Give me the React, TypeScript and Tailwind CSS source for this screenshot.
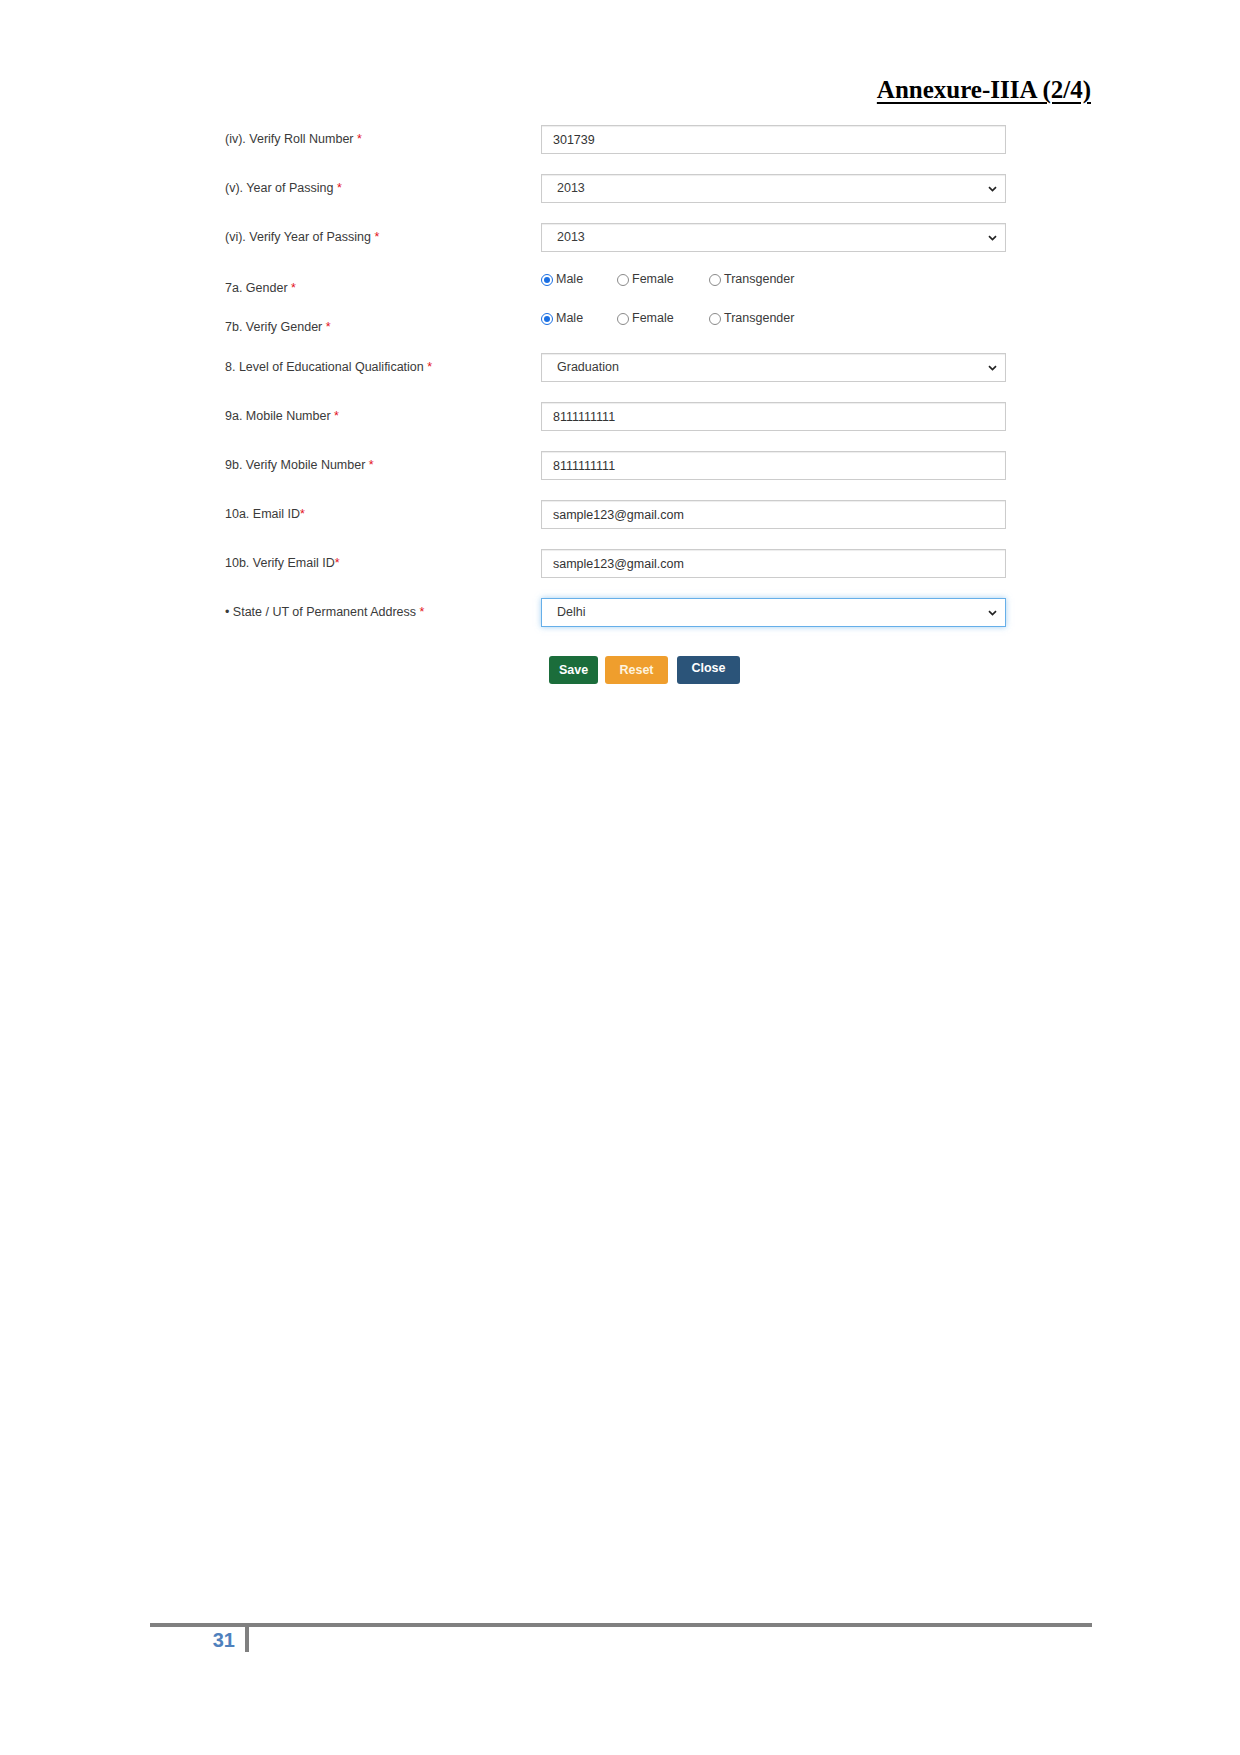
import React from "react";

type Row =
  | { kind: "input"; label: string; value: string; tight?: boolean }
  | { kind: "select"; label: string; value: string; focus?: boolean; tight?: boolean };

const topRows: Row[] = [
  { kind: "input", label: "(iv). Verify Roll Number", value: "301739" },
  { kind: "select", label: "(v). Year of Passing", value: "2013" },
  { kind: "select", label: "(vi). Verify Year of Passing", value: "2013" },
];

const bottomRows: Row[] = [
  { kind: "select", label: "8. Level of Educational Qualification", value: "Graduation" },
  { kind: "input", label: "9a. Mobile Number", value: "8111111111" },
  { kind: "input", label: "9b. Verify Mobile Number", value: "8111111111" },
  { kind: "input", label: "10a. Email ID", value: "sample123@gmail.com", tight: true },
  { kind: "input", label: "10b. Verify Email ID", value: "sample123@gmail.com", tight: true },
  { kind: "select", label: "\u2022 State / UT of Permanent Address", value: "Delhi", focus: true },
];

function Label({ text, tight }: { text: string; tight?: boolean }) {
  return (
    <div className="w-[316px] shrink-0 leading-[15px]">
      {text}
      {!tight && " "}
      <span className="text-[#e3101a]">*</span>
    </div>
  );
}

function Chevron() {
  return (
    <svg width="9" height="6" viewBox="0 0 9 6" className="shrink-0">
      <path d="M1 1.2 L4.5 4.5 L8 1.2" fill="none" stroke="#222" strokeWidth="1.7" />
    </svg>
  );
}

function FieldRow({ row }: { row: Row }) {
  return (
    <div className="mb-[20px] flex h-[29px] items-center">
      <Label text={row.label} tight={row.tight} />
      {row.kind === "input" ? (
        <input
          readOnly
          value={row.value}
          className="h-[29px] w-[465px] border border-[#cccccc] bg-white px-[11px] text-[12.5px] text-[#333] shadow-[inset_0_1px_1px_rgba(0,0,0,0.075)] outline-none"
        />
      ) : (
        <div
          className={
            row.focus
              ? "flex h-[29px] w-[465px] items-center justify-between border border-[#66afe9] bg-white pl-[15px] pr-[8px] shadow-[0_0_6px_rgba(102,175,233,0.6)]"
              : "flex h-[29px] w-[465px] items-center justify-between border border-[#cccccc] bg-white pl-[15px] pr-[8px] shadow-[inset_0_1px_1px_rgba(0,0,0,0.075)]"
          }
        >
          <span>{row.value}</span>
          <Chevron />
        </div>
      )}
    </div>
  );
}

function Radio({ checked, text, width }: { checked?: boolean; text: string; width: string }) {
  return (
    <span className={`inline-flex items-center gap-[3px] ${width}`}>
      {checked ? (
        <span className="flex h-[12px] w-[12px] items-center justify-center rounded-full border-[1.5px] border-[#1a6fe3] bg-white">
          <span className="h-[6px] w-[6px] rounded-full bg-[#1a6fe3]" />
        </span>
      ) : (
        <span className="h-[12px] w-[12px] rounded-full border border-[#8a8a8a] bg-white" />
      )}
      <span>{text}</span>
    </span>
  );
}

function GenderRow({ label, mb }: { label: string; mb: string }) {
  return (
    <div className={`flex items-start ${mb}`}>
      <div className="pt-[9px]">
        <Label text={label} />
      </div>
      <div className="flex items-center leading-[15px]">
        <Radio checked text="Male" width="w-[76px]" />
        <Radio text="Female" width="w-[92px]" />
        <Radio text="Transgender" width="w-[110px]" />
      </div>
    </div>
  );
}

export default function App() {
  return (
    <div className="flex h-[1755px] flex-col bg-white font-['Liberation_Sans',Arial,sans-serif] text-[12.5px] text-[#3a3a3a]">
      <div className="ml-[150px] w-[941px]">
        <div className="mt-[76px] text-right font-['Liberation_Serif','Times_New_Roman',serif] text-[25px] font-bold leading-[28px] text-black underline decoration-2 underline-offset-[4px]">
          Annexure-IIIA (2/4)
        </div>

        <div className="mt-[21px] pl-[75px]">
          {topRows.map((row) => (
            <FieldRow key={row.label} row={row} />
          ))}
          <GenderRow label="7a. Gender" mb="mb-[15px]" />
          <GenderRow label="7b. Verify Gender" mb="mb-[18px]" />
          {bottomRows.map((row) => (
            <FieldRow key={row.label} row={row} />
          ))}

          <div className="ml-[324px] mt-[29px] flex gap-[7px] font-bold text-white">
            <button className="h-[28px] w-[49px] rounded-[3px] bg-[#1b6d3b]">Save</button>
            <button className="h-[28px] w-[63px] rounded-[3px] bg-[#ef9e2d] text-[#fdf3df]">Reset</button>
            <button className="ml-[2px] h-[28px] w-[63px] rounded-[3px] bg-[#2b5479] pb-[3px]">Close</button>
          </div>
        </div>
      </div>

      <div className="flex-1" />

      <footer className="ml-[150px] w-[942px] pb-[103px]">
        <div className="h-[4px] bg-[#808080]" />
        <div className="flex h-[25px]">
          <div className="flex w-[95px] justify-end pr-[10px]">
            <span className="mt-[3px] text-[20px] font-bold leading-[20px] text-[#4f81bd]">31</span>
          </div>
          <div className="h-[25px] w-[4px] bg-[#808080]" />
        </div>
      </footer>
    </div>
  );
}
